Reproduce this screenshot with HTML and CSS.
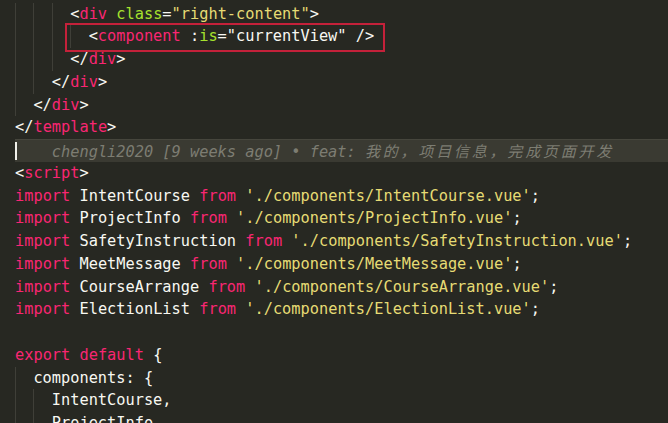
FILE: index.html
```html
<!DOCTYPE html>
<html lang="zh-CN">
<head>
  <meta charset="UTF-8">
  <title>index.vue</title>
  <link rel="stylesheet" href="styles.css">
</head>
<body>

<div class="editor">
  <div class="gutter"></div>
  <div class="code">
    <div class="line"><span class="ind"></span><span class="ind"></span><span class="ind"></span><span class="p">&lt;</span><span class="tag">div</span> <span class="attr">class</span><span class="p">=</span><span class="str">"right-content"</span><span class="p">&gt;</span></div>
    <div class="line"><span class="ind"></span><span class="ind"></span><span class="ind"></span><span class="ind"></span><span class="p">&lt;</span><span class="tag">component</span> <span class="p">:</span><span class="attr">is</span><span class="p">=</span><span class="p">"currentView"</span> <span class="p">/&gt;</span><span class="mark"></span></div>
    <div class="line"><span class="ind"></span><span class="ind"></span><span class="ind"></span><span class="p">&lt;/</span><span class="tag">div</span><span class="p">&gt;</span></div>
    <div class="line"><span class="ind"></span><span class="ind"></span><span class="p">&lt;/</span><span class="tag">div</span><span class="p">&gt;</span></div>
    <div class="line"><span class="ind"></span><span class="p">&lt;/</span><span class="tag">div</span><span class="p">&gt;</span></div>
    <div class="line"><span class="p">&lt;/</span><span class="tag">template</span><span class="p">&gt;</span></div>
    <!-- current line with git blame -->
    <div class="line current"><span class="blame">    chengli2020 [9 weeks ago] • feat: <span class="cjk">我的，项目信息，完成页面开发</span></span></div>
    <div class="line"><span class="p">&lt;</span><span class="tag">script</span><span class="p">&gt;</span></div>
    <div class="line"><span class="kw">import</span> <span class="p">IntentCourse</span> <span class="kw">from</span> <span class="str">'./components/IntentCourse.vue'</span><span class="p">;</span></div>
    <div class="line"><span class="kw">import</span> <span class="p">ProjectInfo</span> <span class="kw">from</span> <span class="str">'./components/ProjectInfo.vue'</span><span class="p">;</span></div>
    <div class="line"><span class="kw">import</span> <span class="p">SafetyInstruction</span> <span class="kw">from</span> <span class="str">'./components/SafetyInstruction.vue'</span><span class="p">;</span></div>
    <div class="line"><span class="kw">import</span> <span class="p">MeetMessage</span> <span class="kw">from</span> <span class="str">'./components/MeetMessage.vue'</span><span class="p">;</span></div>
    <div class="line"><span class="kw">import</span> <span class="p">CourseArrange</span> <span class="kw">from</span> <span class="str">'./components/CourseArrange.vue'</span><span class="p">;</span></div>
    <div class="line"><span class="kw">import</span> <span class="p">ElectionList</span> <span class="kw">from</span> <span class="str">'./components/ElectionList.vue'</span><span class="p">;</span></div>
    <div class="line"></div>
    <div class="line"><span class="kw">export</span> <span class="kw">default</span> <span class="p">{</span></div>
    <div class="line"><span class="ind"></span><span class="p">components: {</span></div>
    <div class="line"><span class="ind"></span><span class="ind"></span><span class="p">IntentCourse,</span></div>
    <div class="line"><span class="ind"></span><span class="ind"></span><span class="p">ProjectInfo,</span></div>
  </div>
</div>

</body>
</html>
```

FILE: styles.css
```css
/* Monokai-like editor */
body {
  margin: 0;
  padding: 0;
  background-color: #272822;
  overflow: hidden;
}
.editor {
  display: flex;
  height: 423px;
  font-family: 'DejaVu Sans Mono', 'Liberation Mono', monospace;
  font-size: 15.3px;
  color: #f8f8f2;
}
.gutter {
  width: 15px;
  flex-shrink: 0;
}
.code {
  flex: 1;
  padding-top: 2.6px;
}
.line {
  position: relative;
  height: 22.75px;
  line-height: 22.75px;
  white-space: pre;
}
.ind {
  display: inline-block;
  box-sizing: border-box;
  width: 2ch;
  height: 22.75px;
  vertical-align: top;
  border-left: 1px solid #3f3f38;
}
.p {
  color: #f8f8f2;
}
.tag,
.kw {
  color: #f92672;
}
.attr {
  color: #a6e22e;
}
.str {
  color: #e6db74;
}
.current {
  background-color: #3a3a32;
  border-top: 1px solid #46463d;
  box-sizing: border-box;
  line-height: 21px;
}
.current::before {
  content: '';
  position: absolute;
  left: 0;
  top: 2px;
  width: 2px;
  height: 18px;
  background-color: #f0f0ea;
}
.blame {
  color: #7d7d72;
  font-style: italic;
}
.cjk {
  font-family: 'Noto Sans CJK SC', sans-serif;
  font-size: 15px;
  letter-spacing: 2.8px;
}
.mark {
  position: absolute;
  left: 50px;
  top: -2px;
  width: 320px;
  height: 29px;
  box-sizing: border-box;
  border: 2px solid #c4213a;
}
```
